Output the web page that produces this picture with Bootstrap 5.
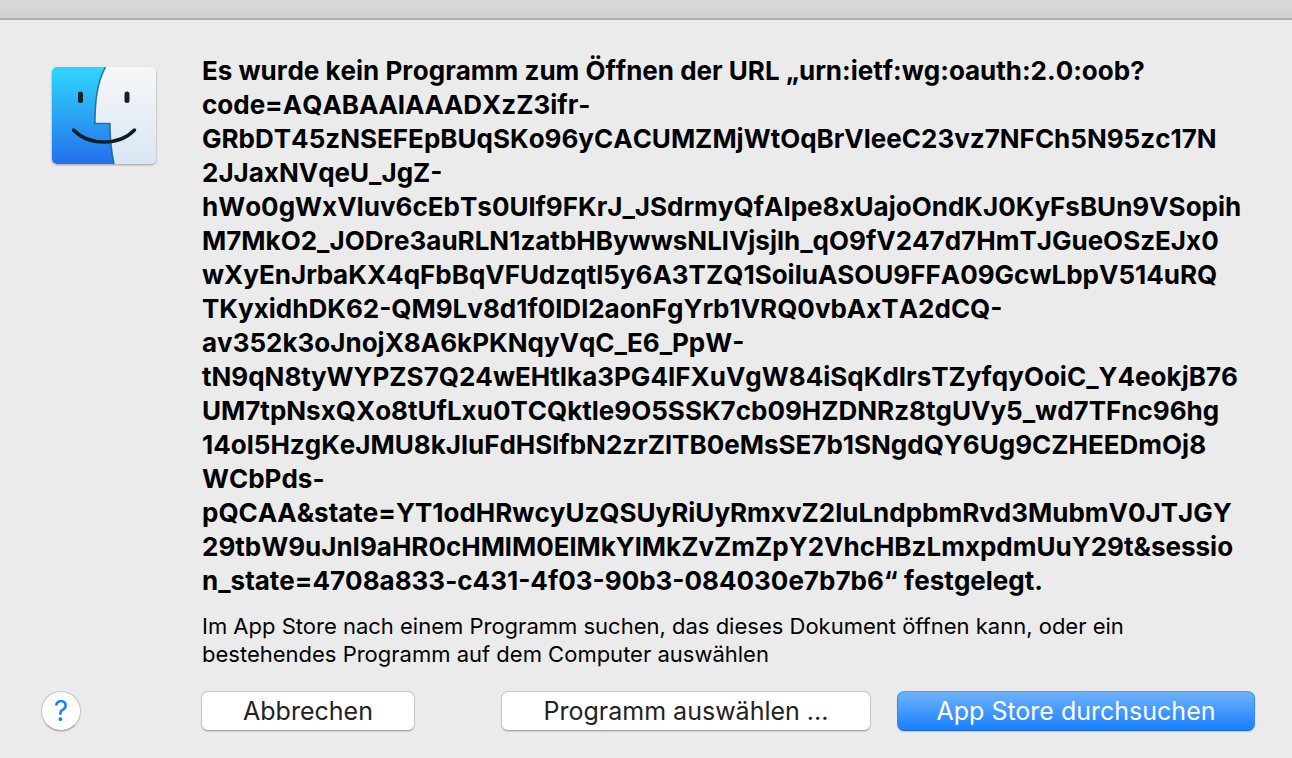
<!DOCTYPE html>
<html lang="de">
<head>
<meta charset="utf-8">
<meta name="viewport" content="width=device-width, initial-scale=1">
<title>Finder</title>
<link href="https://cdn.jsdelivr.net/npm/bootstrap@5.3.0/dist/css/bootstrap.min.css" rel="stylesheet">
<style>
body{background:#ebebeb;color:#000;font-family:Inter,"Liberation Sans",sans-serif}
.titlebar{height:20px;background:linear-gradient(#dad8da,#d0ced0);border-bottom:2px solid #b1afb1}
.dialog{padding:34px 36px 27px 41px}
.side{width:160px}
.app-icon{margin:9px 0 0 6px}
.texts{padding-left:1px}
.message{font-size:26px;line-height:34px;font-weight:700;white-space:nowrap;font-kerning:none}
.info{font-size:22px;line-height:28px;margin-top:14px}
.actions{margin-top:23px}
.mac-btn{height:40px;padding:0;border:1px solid #c6c6c6;border-bottom-color:#a9a9a9;border-radius:7px;background:#fff;color:#222;font-size:25px;line-height:36px;box-shadow:0 1px 1px #0002}
.mac-btn:hover{background:#f6f6f6}
.mac-primary,.mac-primary:hover{background:linear-gradient(#6eb3fa,#1a7efe);border-color:#4a9df8 #2f8bfb #1068f5;color:#fff}
.help{width:40px;border-radius:50%;color:#147efb;font-size:28px}
.w-cancel{flex:0 1 214px}.w-choose{flex:0 1 370px;margin-left:86px}.w-store{flex:0 1 358px;margin-left:26px}
</style>
</head>
<body>
<div class="titlebar"></div>
<main class="dialog" role="alertdialog" aria-labelledby="msg" aria-describedby="info">
<div class="d-flex">
<div class="side flex-shrink-0">
<svg class="app-icon" width="112" height="108" viewBox="0 0 112 108" role="img" aria-label="Finder">
<defs>
<linearGradient id="blue" x2="0" y2="1"><stop stop-color="#2fd7fb"/><stop offset="1" stop-color="#2470ed"/></linearGradient>
<linearGradient id="pale" x2="0" y2="1"><stop stop-color="#f7f7f8"/><stop offset="1" stop-color="#d9e6f3"/></linearGradient>
<clipPath id="tile"><rect x="5" y="4" width="104" height="97" rx="5"/></clipPath>
<filter id="soft" x="-10%" y="-10%" width="120%" height="125%"><feDropShadow dx="0" dy="1" stdDeviation="1" flood-opacity=".35"/></filter>
</defs>
<rect x="5" y="4" width="104" height="97" rx="5" fill="url(#pale)" filter="url(#soft)"/>
<g clip-path="url(#tile)">
<path d="M5 4H58.500C50 20 48 38 48 60.500H63C63 76 64.500 89 67 101H5Z" fill="url(#blue)"/>
<path d="M58.500 4C50 20 48 38 48 60.500H63C63 76 64.500 89 67 101" fill="none" stroke="#15577f" stroke-width="1.500" opacity=".8"/>
</g>
<path d="M33.500 31V37.500M80 31V37.500" fill="none" stroke="#162026" stroke-width="5" stroke-linecap="round"/>
<path d="M26.500 67C42 83 72 83 87.500 67" fill="none" stroke="#111c28" stroke-width="3.500" stroke-linecap="round"/>
</svg>
</div>
<div class="texts flex-grow-1">
<h1 id="msg" class="message mb-0">Es wurde kein Programm zum Öffnen der URL „urn:ietf:wg:oauth:2.0:oob?<br>code=AQABAAIAAADXzZ3ifr-<br>GRbDT45zNSEFEpBUqSKo96yCACUMZMjWtOqBrVleeC23vz7NFCh5N95zc17N<br>2JJaxNVqeU_JgZ-<br>hWo0gWxVIuv6cEbTs0Ulf9FKrJ_JSdrmyQfAIpe8xUajoOndKJ0KyFsBUn9VSopih<br>M7MkO2_JODre3auRLN1zatbHBywwsNLlVjsjlh_qO9fV247d7HmTJGueOSzEJx0<br>wXyEnJrbaKX4qFbBqVFUdzqtl5y6A3TZQ1SoiluASOU9FFA09GcwLbpV514uRQ<br>TKyxidhDK62-QM9Lv8d1f0lDl2aonFgYrb1VRQ0vbAxTA2dCQ-<br>av352k3oJnojX8A6kPKNqyVqC_E6_PpW-<br>tN9qN8tyWYPZS7Q24wEHtIka3PG4IFXuVgW84iSqKdIrsTZyfqyOoiC_Y4eokjB76<br>UM7tpNsxQXo8tUfLxu0TCQktle9O5SSK7cb09HZDNRz8tgUVy5_wd7TFnc96hg<br>14ol5HzgKeJMU8kJluFdHSlfbN2zrZlTB0eMsSE7b1SNgdQY6Ug9CZHEEDmOj8<br>WCbPds-<br>pQCAA&amp;state=YT1odHRwcyUzQSUyRiUyRmxvZ2luLndpbmRvd3MubmV0JTJGY<br>29tbW9uJnI9aHR0cHMlM0ElMkYlMkZvZmZpY2VhcHBzLmxpdmUuY29t&amp;sessio<br>n_state=4708a833-c431-4f03-90b3-084030e7b7b6“ festgelegt.</h1>
<p id="info" class="info mb-0">Im App Store nach einem Programm suchen, das dieses Dokument öffnen kann, oder ein<br>bestehendes Programm auf dem Computer auswählen</p>
</div>
</div>
<div class="actions d-flex">
<div class="side flex-shrink-0"><button type="button" class="btn mac-btn help" aria-label="Hilfe">?</button></div>
<button type="button" class="btn mac-btn w-cancel">Abbrechen</button>
<button type="button" class="btn mac-btn w-choose">Programm auswählen ...</button>
<button type="button" class="btn mac-btn mac-primary w-store">App Store durchsuchen</button>
</div>
</main>
<script src="https://cdn.jsdelivr.net/npm/bootstrap@5.3.0/dist/js/bootstrap.bundle.min.js"></script>
</body>
</html>
